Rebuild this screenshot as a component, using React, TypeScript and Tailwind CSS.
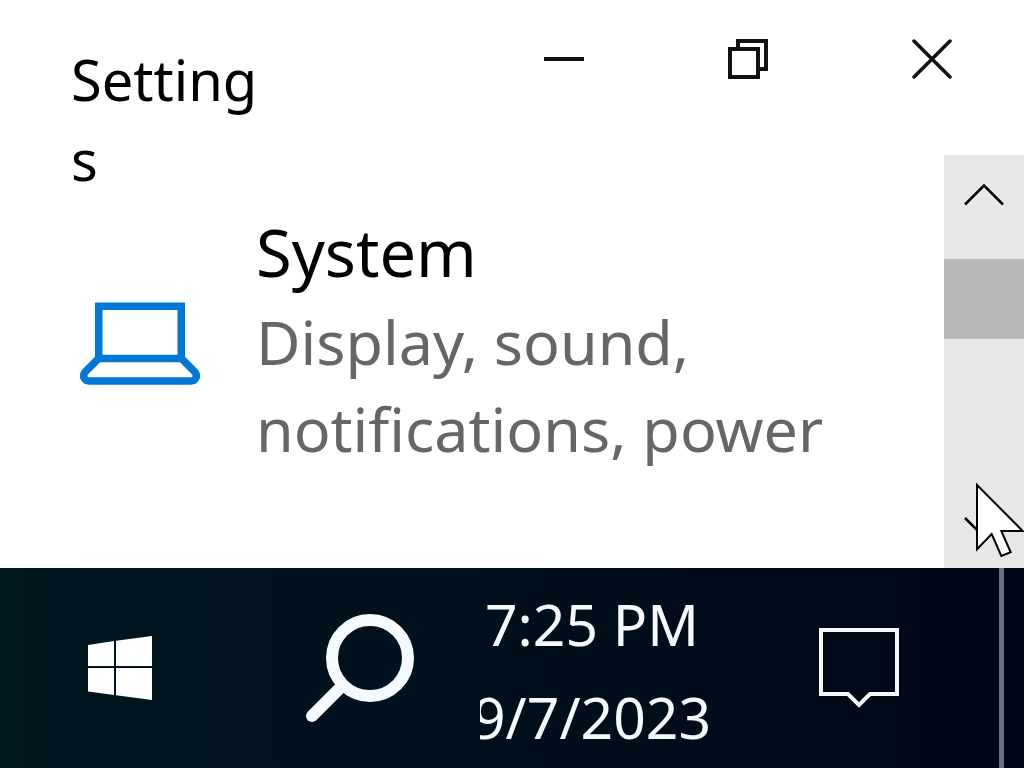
import type { ReactNode } from "react";

function CaptionButton({ label, children }: { label: string; children: ReactNode }) {
  return (
    <button
      type="button"
      aria-label={label}
      className="flex h-[118px] w-46 items-center justify-center text-[#111]"
    >
      <svg width="40" height="40" viewBox="0 0 40 40" fill="none" stroke="currentColor" strokeWidth="4" aria-hidden="true">
        {children}
      </svg>
    </button>
  );
}

function TitleBar() {
  return (
    <header className="flex h-[155px] justify-between">
      <h1 className="mt-[39px] ml-[71px] h-40 w-50 text-[56px] leading-[80px] break-all">Settings</h1>
      <div className="flex">
        <CaptionButton label="Minimize">
          <path d="M0 20H40" />
        </CaptionButton>
        <CaptionButton label="Restore">
          <path d="M2 10H30V38H2Z" />
          <path d="M10 10V2H38V30H30" />
        </CaptionButton>
        <CaptionButton label="Close">
          <path d="M2 2L38 38M38 2L2 38" strokeWidth="3.5" strokeLinecap="round" />
        </CaptionButton>
      </div>
    </header>
  );
}

function LaptopIcon() {
  return (
    <svg width="120" height="84" viewBox="0 0 120 84" fill="none" stroke="#0078d7" className="mt-[94px] shrink-0" aria-hidden="true">
      <path d="M18.750 56V4.250H101.250V56" strokeWidth="7.500" />
      <path
        d="M18.500 56.500H101.500L114.500 69.500C118 73.500 116 79 111 79H9C4 79 2 73.500 5.500 69.500Z"
        strokeWidth="7.500"
      />
    </svg>
  );
}

function ScrollBar() {
  return (
    <div className="flex w-20 shrink-0 flex-col bg-[#e7e7e7]">
      <button type="button" aria-label="Scroll up" className="flex h-20 items-center justify-center">
        <svg width="40" height="22" viewBox="0 0 40 22" fill="none" stroke="#000" strokeWidth="2.5" aria-hidden="true">
          <path d="M1 20.500L20 1.500L39 20.500" />
        </svg>
      </button>
      <div className="flex-1 pt-6">
        <div className="h-20 bg-[#b9b9b9]" />
      </div>
      <button type="button" aria-label="Scroll down" className="flex h-20 items-center justify-center">
        <svg width="40" height="22" viewBox="0 0 40 22" fill="none" stroke="#000" strokeWidth="2.5" aria-hidden="true">
          <path d="M1 1L20 20L39 1" />
        </svg>
      </button>
    </div>
  );
}

function Pointer() {
  return (
    <svg
      width="49"
      height="76"
      viewBox="975 482 49 76"
      className="pointer-events-none absolute right-0 bottom-[10px]"
      aria-hidden="true"
    >
      <path
        d="M977 485V549.300L991.700 534L1001.300 556L1010.700 552.300L1001.300 531H1022.700Z"
        fill="#fff"
        stroke="#000"
        strokeWidth="2"
      />
    </svg>
  );
}

function Taskbar() {
  return (
    <footer className="flex h-50 bg-linear-to-r from-[#001720] to-[#000718] text-[#f5faff]">
      <button type="button" aria-label="Start" className="flex w-60 items-center justify-center">
        <svg width="64" height="64" viewBox="0 0 64 64" fill="#fff" aria-hidden="true">
          <path d="M0 9L26 5V30H0ZM28 4.700L64 0V30H28ZM0 32H26V59L0 55.500ZM28 32H64V64L28 59.300Z" />
        </svg>
      </button>
      <button type="button" aria-label="Search" className="flex w-60 items-center justify-center">
        <svg width="108" height="108" viewBox="0 0 108 108" fill="none" stroke="currentColor" aria-hidden="true">
          <circle cx="64" cy="44" r="38" strokeWidth="12" />
          <path d="M36 72L6 102" strokeWidth="12" strokeLinecap="round" />
        </svg>
      </button>
      <button
        type="button"
        className="flex w-60 flex-col items-center justify-center overflow-hidden pt-1.5 pr-4 text-[57px] leading-[93px] whitespace-nowrap"
      >
        <span>7:25 PM</span>
        <span>9/7/2023</span>
      </button>
      <button type="button" aria-label="Notifications" className="flex flex-1 items-center justify-center pr-px">
        <svg width="80" height="80" viewBox="0 0 80 80" fill="none" stroke="currentColor" strokeWidth="4" aria-hidden="true">
          <path d="M2 2H78V66H51L40 77L29 66H2Z" />
        </svg>
      </button>
      <button type="button" aria-label="Show desktop" className="w-[25px] border-l-5 border-[#6b6f82]" />
    </footer>
  );
}

export default function App() {
  return (
    <div className="flex min-h-screen flex-col bg-white font-['Noto_Sans','Open_Sans',sans-serif] text-black">
      <main className="relative flex flex-1 flex-col">
        <TitleBar />
        <div className="flex flex-1">
          <a href="#system" className="flex flex-1 items-start gap-14 pt-[53px] pl-20">
            <LaptopIcon />
            <span className="flex flex-col">
              <span className="text-[65px] leading-[88px]">System</span>
              <span className="mt-0.5 max-w-[620px] text-[61px] leading-[87px] text-[#666]">
                Display, sound, notifications, power
              </span>
            </span>
          </a>
          <ScrollBar />
        </div>
        <Pointer />
      </main>
      <Taskbar />
    </div>
  );
}
